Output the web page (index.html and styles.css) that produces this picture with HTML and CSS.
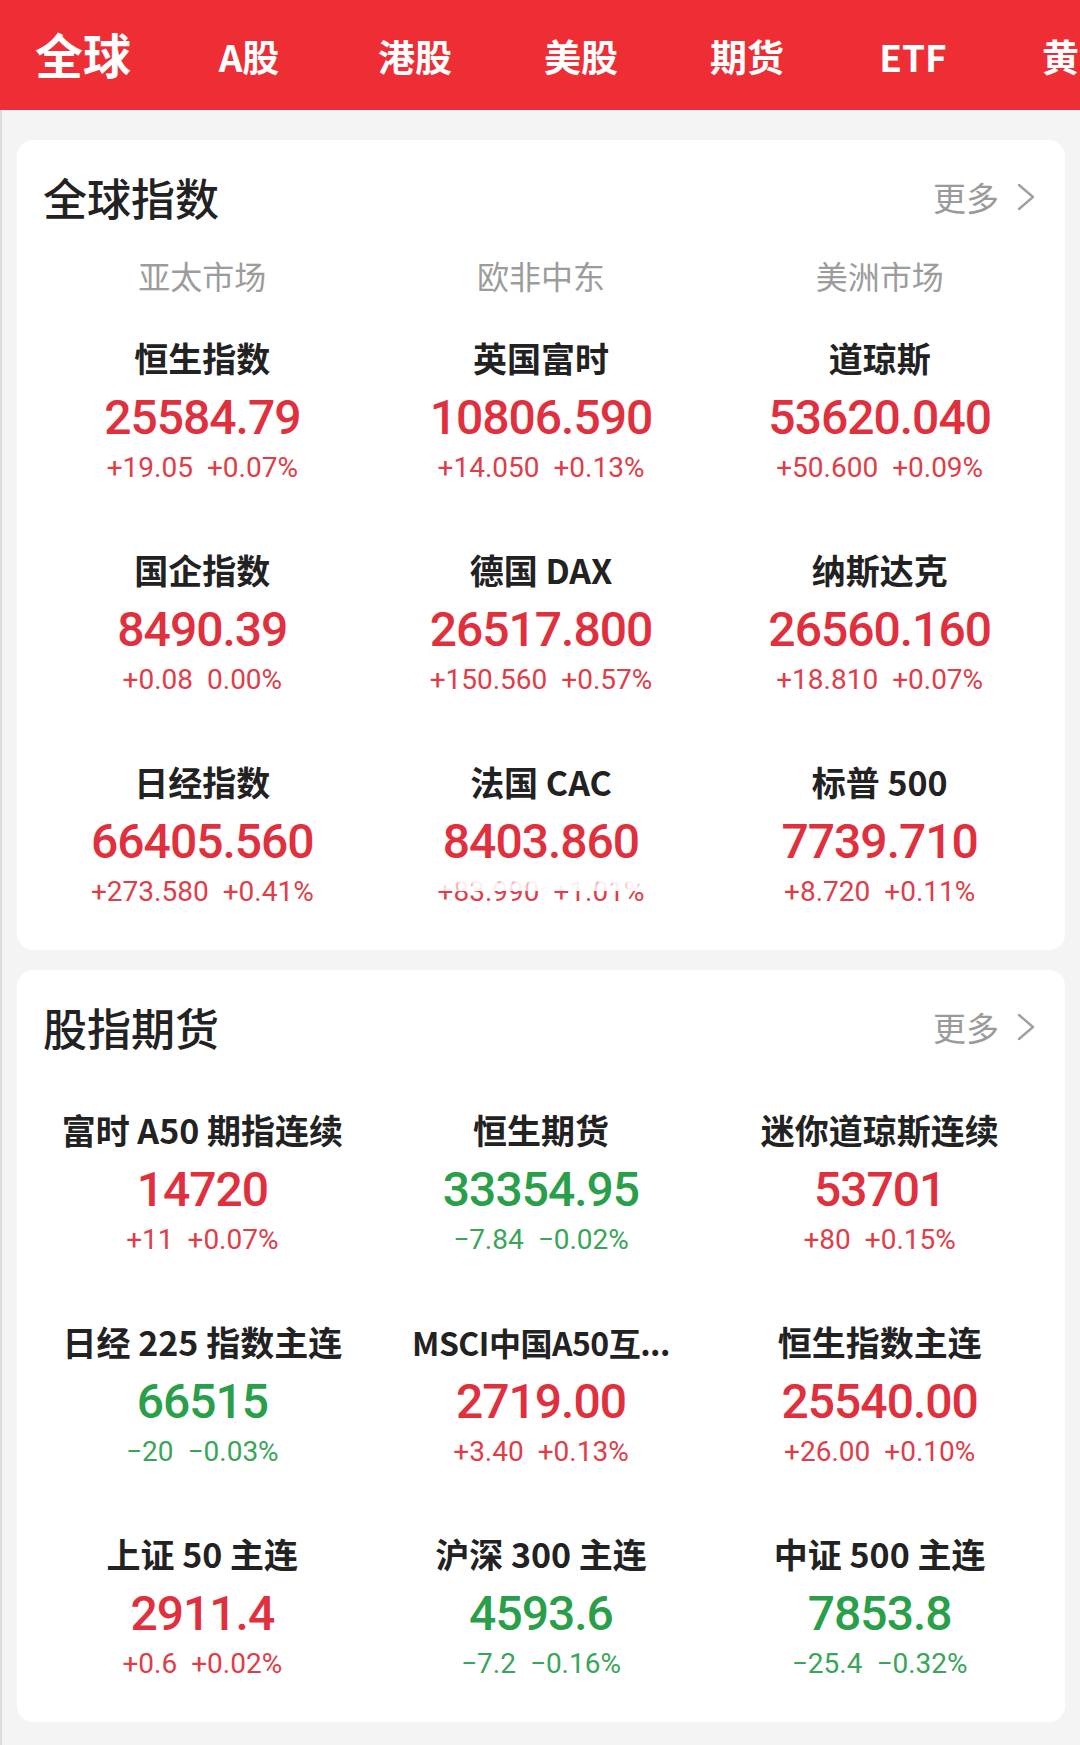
FILE: index.html
```html
<!DOCTYPE html>
<html lang="zh-CN">
<head>
<meta charset="utf-8">
<title>全球行情</title>
<link rel="stylesheet" href="styles.css">
</head>
<body>
<header class="tabbar">
  <div class="tab tab-active">全球</div>
  <div class="tab">A股</div>
  <div class="tab">港股</div>
  <div class="tab">美股</div>
  <div class="tab">期货</div>
  <div class="tab">ETF</div>
  <div class="tab">黄金</div>
</header>

<main class="page">
  <section class="card">
    <div class="card-head">
      <h2 class="card-title">全球指数</h2>
      <a class="more">更多<svg class="chev" viewBox="0 0 18 28" width="18" height="28"><polyline points="2,2 16,14 2,26" fill="none" stroke="#a0a0a0" stroke-width="2.4" stroke-linecap="round" stroke-linejoin="round"/></svg></a>
    </div>
    <div class="regions">
      <div class="region">亚太市场</div>
      <div class="region">欧非中东</div>
      <div class="region">美洲市场</div>
    </div>
    <div class="grid grid-indices">
      <div class="cell"><div class="name">恒生指数</div><div class="price up">25584.79</div><div class="chg up"><span>+19.05</span><span>+0.07%</span></div></div>
      <div class="cell"><div class="name">英国富时</div><div class="price up">10806.590</div><div class="chg up"><span>+14.050</span><span>+0.13%</span></div></div>
      <div class="cell"><div class="name">道琼斯</div><div class="price up">53620.040</div><div class="chg up"><span>+50.600</span><span>+0.09%</span></div></div>

      <div class="cell"><div class="name">国企指数</div><div class="price up">8490.39</div><div class="chg up"><span>+0.08</span><span>0.00%</span></div></div>
      <div class="cell"><div class="name">德国 DAX</div><div class="price up">26517.800</div><div class="chg up"><span>+150.560</span><span>+0.57%</span></div></div>
      <div class="cell"><div class="name">纳斯达克</div><div class="price up">26560.160</div><div class="chg up"><span>+18.810</span><span>+0.07%</span></div></div>

      <div class="cell"><div class="name">日经指数</div><div class="price up">66405.560</div><div class="chg up"><span>+273.580</span><span>+0.41%</span></div></div>
      <div class="cell"><div class="name">法国 CAC</div><div class="price up">8403.860</div><div class="chg up glitch"><span>+83.990</span><span>+1.01%</span></div></div>
      <div class="cell"><div class="name">标普 500</div><div class="price up">7739.710</div><div class="chg up"><span>+8.720</span><span>+0.11%</span></div></div>
    </div>
  </section>

  <section class="card">
    <div class="card-head">
      <h2 class="card-title">股指期货</h2>
      <a class="more">更多<svg class="chev" viewBox="0 0 18 28" width="18" height="28"><polyline points="2,2 16,14 2,26" fill="none" stroke="#a0a0a0" stroke-width="2.4" stroke-linecap="round" stroke-linejoin="round"/></svg></a>
    </div>
    <div class="grid grid-futures">
      <div class="cell"><div class="name">富时 A50 期指连续</div><div class="price up">14720</div><div class="chg up"><span>+11</span><span>+0.07%</span></div></div>
      <div class="cell"><div class="name">恒生期货</div><div class="price down">33354.95</div><div class="chg down"><span>−7.84</span><span>−0.02%</span></div></div>
      <div class="cell"><div class="name">迷你道琼斯连续</div><div class="price up">53701</div><div class="chg up"><span>+80</span><span>+0.15%</span></div></div>

      <div class="cell"><div class="name">日经 225 指数主连</div><div class="price down">66515</div><div class="chg down"><span>−20</span><span>−0.03%</span></div></div>
      <div class="cell"><div class="name name-tight">MSCI中国A50互...</div><div class="price up">2719.00</div><div class="chg up"><span>+3.40</span><span>+0.13%</span></div></div>
      <div class="cell"><div class="name">恒生指数主连</div><div class="price up">25540.00</div><div class="chg up"><span>+26.00</span><span>+0.10%</span></div></div>

      <div class="cell"><div class="name">上证 50 主连</div><div class="price up">2911.4</div><div class="chg up"><span>+0.6</span><span>+0.02%</span></div></div>
      <div class="cell"><div class="name">沪深 300 主连</div><div class="price down">4593.6</div><div class="chg down"><span>−7.2</span><span>−0.16%</span></div></div>
      <div class="cell"><div class="name">中证 500 主连</div><div class="price down">7853.8</div><div class="chg down"><span>−25.4</span><span>−0.32%</span></div></div>
    </div>
  </section>
</main>
</body>
</html>
```

FILE: styles.css
```css
* {
  box-sizing: border-box;
}

html, body {
  margin: 0;
  padding: 0;
}

body {
  width: 1080px;
  min-height: 1745px;
  background: #f4f4f4;
  font-family: "Noto Sans CJK SC", "Noto Sans", sans-serif;
  color: #222;
  overflow: hidden;
}

/* ---------- top tab bar ---------- */
.tabbar {
  display: flex;
  align-items: center;
  height: 110px;
  background: #ee2d34;
  overflow: hidden;
  white-space: nowrap;
}

.tab {
  flex: 0 0 166px;
  text-align: center;
  color: #fff;
  font-size: 37px;
  font-weight: 700;
  line-height: 50px;
  padding-top: 2px;
}

.tab-active {
  font-size: 48px;
  padding-top: 0;
  margin-top: -4px;
}

/* ---------- page & cards ---------- */
.page {
  display: flex;
  flex-direction: column;
  gap: 20px;
  padding: 30px 15px 0 15px;
  border-left: 2px solid #dcdcdc;
  min-height: 1635px;
}

.card {
  background: #fff;
  border-radius: 16px;
  padding: 29px 16px 46px 16px;
}

.card-head {
  display: flex;
  align-items: center;
  justify-content: space-between;
  height: 56px;
  padding: 0 14px 0 10px;
}

.card-title {
  margin: 0;
  font-size: 44px;
  font-weight: 500;
  line-height: 56px;
  color: #222;
}

.more {
  display: flex;
  align-items: center;
  gap: 18px;
  font-size: 33px;
  color: #9a9a9a;
  line-height: 40px;
}

.chev {
  display: block;
}

.regions {
  display: grid;
  grid-template-columns: repeat(3, 1fr);
  margin-top: 30px;
}

.region {
  text-align: center;
  font-size: 32px;
  line-height: 40px;
  color: #9c9c9c;
}

.grid {
  display: grid;
  grid-template-columns: repeat(3, 1fr);
  row-gap: 68px;
}

.grid-indices {
  margin-top: 41px;
}

.grid-futures {
  margin-top: 53px;
}

.cell {
  display: flex;
  flex-direction: column;
  align-items: center;
  text-align: center;
}

.name {
  font-size: 34px;
  font-weight: 700;
  line-height: 44px;
  color: #222;
  white-space: nowrap;
}

.name-tight {
  font-size: 32px;
  letter-spacing: -0.5px;
}

.price {
  font-family: "Roboto", "Liberation Sans", sans-serif;
  font-size: 48px;
  font-weight: 500;
  letter-spacing: -1px;
  line-height: 76px;
}

.chg {
  position: relative;
  display: flex;
  gap: 14px;
  font-family: "Roboto", "Liberation Sans", sans-serif;
  font-size: 28px;
  font-weight: 400;
  line-height: 24px;
}

.up {
  color: #e1303d;
}

.down {
  color: #2a9f4a;
}

.chg.up {
  color: #e03d48;
}

.chg.down {
  color: #39a55a;
}

/* smeared rendering of the CAC change line in the reference */
.glitch::after {
  content: "";
  position: absolute;
  left: -6px;
  right: -6px;
  top: -6px;
  height: 70%;
  background: repeating-linear-gradient(90deg,
      rgba(255, 255, 255, 0.92) 0px,
      rgba(255, 255, 255, 0.92) 9px,
      rgba(255, 255, 255, 0.55) 11px,
      rgba(255, 255, 255, 0.92) 14px);
}
```
